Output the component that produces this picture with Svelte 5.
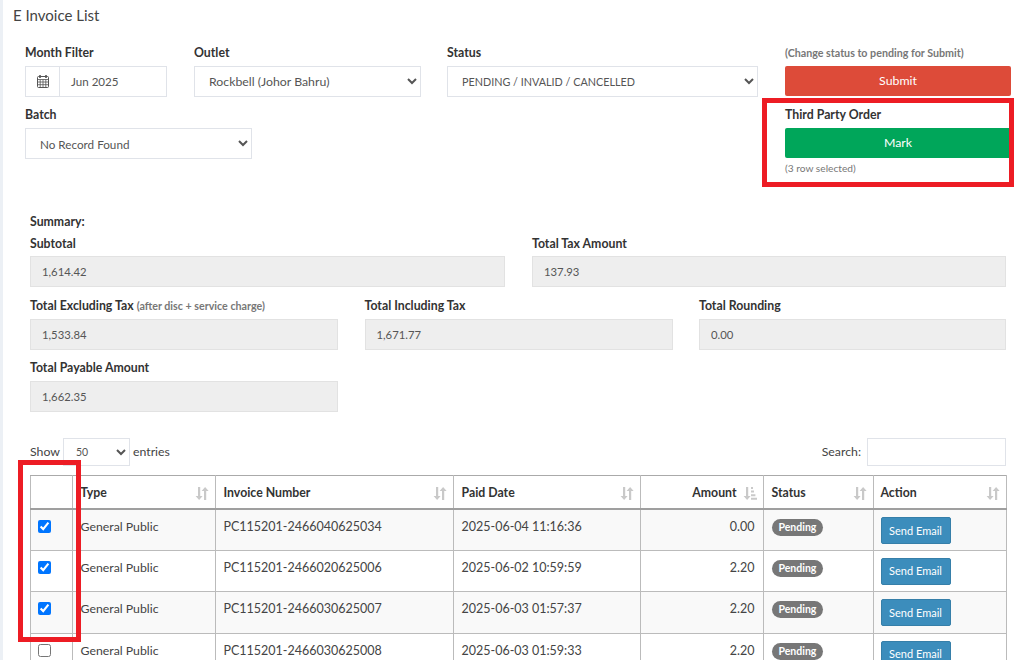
<script>
  const rows = [
    { inv: 'PC115201-2466040625034', date: '2025-06-04 11:16:36', amt: '0.00', on: true },
    { inv: 'PC115201-2466020625006', date: '2025-06-02 10:59:59', amt: '2.20', on: true },
    { inv: 'PC115201-2466030625007', date: '2025-06-03 01:57:37', amt: '2.20', on: true },
    { inv: 'PC115201-2466030625008', date: '2025-06-03 01:59:33', amt: '2.20', on: false }
  ];
  const cols = [
    { t: 'Type', w: 143 },
    { t: 'Invoice Number', w: 238 },
    { t: 'Paid Date', w: 187 },
    { t: 'Amount', w: 123, right: true, bars: true },
    { t: 'Status', w: 110 },
    { t: 'Action', w: 133 }
  ];
</script>

{#snippet field(label, value, cls)}
  <div class={cls}>
    <div class="lbl">{@html label}</div>
    <div class="ro">{value}</div>
  </div>
{/snippet}

<div class="page">
  <h1>E Invoice List</h1>

  <div class="filters">
    <div class="row">
      <div class="f month">
        <div class="lbl">Month Filter</div>
        <div class="group">
          <span class="addon">
            <svg width="12" height="13" viewBox="0 0 12 13" fill="none" stroke="#555" stroke-width="1">
              <rect x="0.5" y="1.5" width="11" height="11" rx="1" />
              <path d="M0.5 4.5h11M0.5 7h11M0.5 9.7h11M3.2 4.500v8M6 4.500v8M8.800 4.500v8" stroke-width="0.8" />
              <path d="M3 0v3M9 0v3" stroke-width="1.6" />
            </svg>
          </span>
          <span class="val">Jun 2025</span>
        </div>
      </div>
      <div class="f outlet">
        <div class="lbl">Outlet</div>
        <select><option>Rockbell (Johor Bahru)</option></select>
      </div>
      <div class="f status">
        <div class="lbl">Status</div>
        <select class="caps"><option>PENDING / INVALID / CANCELLED</option></select>
      </div>
      <div class="f side">
        <div class="hint">(Change status to pending for Submit)</div>
        <button class="btn red">Submit</button>
      </div>
    </div>
    <div class="row second">
      <div class="f batch">
        <div class="lbl">Batch</div>
        <select class="none"><option>No Record Found</option></select>
      </div>
      <div class="f side">
        <div class="lbl">Third Party Order</div>
        <button class="btn green">Mark</button>
        <div class="sel">(3 row selected)</div>
      </div>
    </div>
  </div>

  <div class="summary">
    <div class="lbl">Summary:</div>
    <div class="two">
      {@render field('Subtotal', '1,614.42', 'c')}
      {@render field('Total Tax Amount', '137.93', 'c')}
    </div>
    <div class="three">
      {@render field('Total Excluding Tax <small>(after disc + service charge)</small>', '1,533.84', 'c')}
      {@render field('Total Including Tax', '1,671.77', 'c')}
      {@render field('Total Rounding', '0.00', 'c')}
      {@render field('Total Payable Amount', '1,662.35', 'c')}
    </div>
  </div>

  <div class="tools">
    <div class="show">Show <select class="len"><option>50</option></select> entries</div>
    <div class="search">Search: <input type="text" aria-label="Search" /></div>
  </div>

  <table>
    <colgroup>
      <col style="width: 42px" />
      {#each cols as c}<col style="width: {c.w}px" />{/each}
    </colgroup>
    <thead>
      <tr>
        <th></th>
        {#each cols as c}
          <th class:right={c.right}>
            <span class="th">
              <span class="name">{c.t}</span>
              <svg class="sort" width="14" height="13" viewBox="0 0 14 13" fill="#c9c9c9">
                <path d="M3 0h2.200v9H7.600L4.100 13 .6 9H3z" />
                {#if c.bars}
                  <path d="M8 0h2v2H8zM8 3.600h3v2H8zM8 7.200h4.400v2H8zM8 10.800h6v2H8z" />
                {:else}
                  <path d="M9 13h2.200V4h2.400L10.100 0 6.600 4H9z" />
                {/if}
              </svg>
            </span>
          </th>
        {/each}
      </tr>
    </thead>
    <tbody>
      {#each rows as r}
        <tr>
          <td class="ck"><input type="checkbox" checked={r.on} aria-label="Select row" /></td>
          <td>General Public</td>
          <td class="num">{r.inv}</td>
          <td class="num">{r.date}</td>
          <td class="right num">{r.amt}</td>
          <td><span class="badge">Pending</span></td>
          <td class="act"><button class="mail">Send Email</button></td>
        </tr>
      {/each}
    </tbody>
  </table>

  <div class="mark mark-a"></div>
  <div class="mark mark-b"></div>
</div>

<style>
  :global(html), :global(body) {
    margin: 0;
    height: 660px;
    overflow: hidden;
    background: #fff;
  }
  .page {
    position: relative;
    width: 1014px;
    height: 660px;
    overflow: hidden;
    box-sizing: border-box;
    border-left: 3px solid #ecf0f5;
    font: 12.3px/20px Lato, "Noto Sans", sans-serif;
    color: #444;
  }
  h1 {
    margin: 0;
    padding: 5px 0 0 10px;
    font-size: 15px;
    line-height: 21px;
    font-weight: 400;
  }
  .filters {
    padding: 16px 3px 0 22px;
  }
  .row {
    display: flex;
  }
  .second {
    justify-content: space-between;
    margin-top: 7px;
  }
  .month { width: 142px; margin-right: 27px; }
  .outlet { width: 227px; margin-right: 26px; }
  .status { width: 311px; margin-right: 27px; }
  .batch { width: 227px; }
  .side { width: 226px; }
  .lbl {
    font-weight: 700;
    color: #333;
    height: 20px;
    padding-top: 1px;
    margin-bottom: 3px;
    white-space: nowrap;
  }
  .lbl :global(small) {
    font-size: 10.7px;
    color: #777;
  }
  .hint {
    height: 20px;
    padding-top: 1px;
    margin-bottom: 3px;
    font-size: 10.7px;
    font-weight: 700;
    color: #777;
    white-space: nowrap;
  }
  .group {
    display: flex;
    height: 31px;
    box-sizing: border-box;
    border: 1px solid #e0e3e9;
  }
  .addon {
    width: 33px;
    display: flex;
    align-items: center;
    justify-content: center;
    border-right: 1px solid #e0e3e9;
  }
  .val {
    padding-left: 11px;
    line-height: 29px;
    font-size: 11.6px;
    color: #555;
  }
  select {
    display: block;
    width: 100%;
    height: 31px;
    box-sizing: border-box;
    padding: 0 10px;
    border: 1px solid #e0e3e9;
    border-radius: 0;
    background-color: #fff;
    font: inherit;
    color: #555;
  }
  select.caps { font-size: 10.8px; }
  select.none { font-size: 11.7px; }
  .btn {
    display: block;
    width: 100%;
    height: 30px;
    border: 0;
    border-radius: 2px;
    padding: 0;
    font: inherit;
    color: #fff;
  }
  .red { background: #dd4b39; }
  .green { background: #00a65a; }
  .sel {
    font-size: 10.2px;
    line-height: 16px;
    margin-top: 2px;
    color: #777;
  }
  .summary {
    padding: 0 8px 0 27px;
    margin-top: 35px;
  }
  .summary .lbl {
    margin-bottom: 1px;
  }
  .summary .c .lbl {
    margin-bottom: 2px;
  }
  .two {
    display: grid;
    grid-template-columns: 475px 474px;
    column-gap: 27px;
  }
  .three {
    display: grid;
    grid-template-columns: 308px 308px 307px;
    column-gap: 26.5px;
    row-gap: 8px;
    margin-top: 9px;
  }
  .summary .three .lbl {
    padding-top: 0;
    margin-bottom: 3px;
  }
  .ro {
    height: 31px;
    box-sizing: border-box;
    border: 1px solid #e2e2e2;
    background: #eee;
    padding-left: 11px;
    line-height: 29px;
    font-size: 11.3px;
    color: #555;
  }
  .tools {
    display: flex;
    justify-content: space-between;
    align-items: center;
    padding: 0 8px 0 27px;
    margin-top: 26px;
    height: 28px;
  }
  .show, .search {
    display: flex;
    align-items: center;
    gap: 3px;
  }
  .search { gap: 6px; }
  .len {
    width: 67px;
    height: 28px;
    padding: 0 8px;
    font-size: 10.5px;
  }
  .search input {
    width: 139px;
    height: 28px;
    box-sizing: border-box;
    border: 1px solid #e0e3e9;
    background: #fff;
    padding: 0;
  }
  table {
    margin: 9px 0 0 26.5px;
    width: 976px;
    table-layout: fixed;
    border-collapse: collapse;
  }
  th, td {
    border: 1px solid #bbb;
    padding: 7px 8px 5px;
    vertical-align: top;
    text-align: left;
    white-space: nowrap;
  }
  thead tr { height: 33px; }
  th {
    padding: 7px 6px 5px 8px;
    border-bottom: 2px solid #9f9f9f;
    border-top: 1px solid #aaa;
    color: #333;
    font-weight: 700;
  }
  th:last-child { padding-left: 7px; }
  .th {
    display: flex;
    justify-content: space-between;
    align-items: center;
  }
  th.right .th { justify-content: flex-end; gap: 6px; }
  .sort { flex: none; }
  tbody tr { height: 41.4px; }
  tbody tr:nth-child(odd) { background: #f9f9f9; }
  .right { text-align: right; }
  .num { font-size: 12.5px; }
  .ck { padding: 10px 0 0 7px; }
  .ck input { display: block; margin: 0; width: 13px; height: 13px; }
  .badge {
    display: inline-block;
    margin-top: 2px;
    padding: 0 7px;
    height: 17px;
    line-height: 16px;
    border-radius: 9px;
    background: #777;
    color: #fff;
    font-size: 10.5px;
    font-weight: 700;
    vertical-align: top;
  }
  .act { padding: 7px 7px 5px; }
  .mail {
    display: block;
    width: 70px;
    height: 27px;
    padding: 0;
    border: 1px solid #367fa9;
    border-radius: 2px;
    background: #3c8dbc;
    color: #fff;
    font: inherit;
    font-size: 11px;
  }
  .mark {
    position: absolute;
    box-sizing: border-box;
    border: 5px solid #ed1c24;
    pointer-events: none;
  }
  .mark-a { left: 759px; top: 98px; width: 252px; height: 89px; }
  .mark-b { left: 15px; top: 460px; width: 63px; height: 182px; }
</style>
